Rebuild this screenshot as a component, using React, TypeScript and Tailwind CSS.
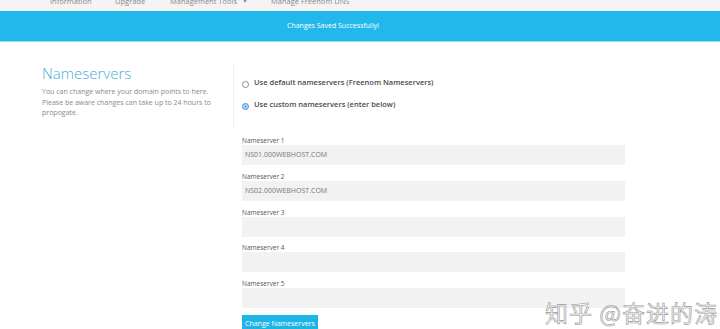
const navItems = ["Information", "Upgrade", "Management Tools", "Manage Freenom DNS"]

const servers = [
  { label: "Nameserver 1", value: "NS01.000WEBHOST.COM" },
  { label: "Nameserver 2", value: "NS02.000WEBHOST.COM" },
  { label: "Nameserver 3", value: "" },
  { label: "Nameserver 4", value: "" },
  { label: "Nameserver 5", value: "" },
]

function Radio({ checked, label }: { checked?: boolean; label: string }) {
  return (
    <label className="flex items-center gap-[5px] h-[12px]">
      <span
        className={
          checked
            ? "w-[7px] h-[7px] rounded-full border border-[#5b9fe0] bg-[#2f7fd8] shadow-[inset_0_0_0_1.5px_#cfe3f8] mt-[3px]"
            : "w-[7px] h-[7px] rounded-full border border-[#8a8a8a] bg-white mt-[3px]"
        }
      />
      <span className="text-[7.5px] font-semibold text-[#4a4a4a]">{label}</span>
    </label>
  )
}

export default function App() {
  return (
    <div className="relative w-[720px] h-[329px] overflow-hidden bg-white font-['Open_Sans',sans-serif]">
      <div className="h-[11px] bg-[#f4f4f4] overflow-hidden">
        <div className="flex items-center -mt-[4px] text-[7.5px] leading-[10px] text-[#8a8a8a]">
          <span className="ml-[50px] w-[65px]">{navItems[0]}</span>
          <span className="w-[55px]">{navItems[1]}</span>
          <span className="w-[72px]">{navItems[2]}</span>
          <span className="w-[29px] text-[6px]">▼</span>
          <span>{navItems[3]}</span>
        </div>
      </div>

      <div className="h-[31px] bg-[#23b8eb] border-b border-[#9ad9f2] flex items-center pl-[287px]">
        <span className="text-[7px] text-white">Changes Saved Successfully!</span>
      </div>

      <div className="flex pt-[22px]">
        <div className="w-[192px] ml-[42px] self-start border-r border-[#f0f0f0] pb-[8px]">
          <h1 className="text-[15px] leading-[18px] font-light text-[#4eaad6]">Nameservers</h1>
          <p className="mt-[5px] text-[7px] leading-[10.5px] text-[#8a8a8a] pr-[10px]">
            You can change where your domain points to here. Please be aware changes can take up to 24 hours to
            propogate.
          </p>
        </div>

        <div className="w-[383px] ml-[8px] pt-[13px]">
          <div className="flex flex-col gap-[9.5px]">
            <Radio label="Use default nameservers (Freenom Nameservers)" />
            <Radio checked label="Use custom nameservers (enter below)" />
          </div>

          <div className="mt-[25.5px]">
            {servers.map((s) => (
              <div key={s.label} className="mb-[6.75px]">
                <div className="h-[9px] text-[6.5px] leading-[9px] text-[#555]">{s.label}</div>
                <div className="h-[20px] bg-[#f2f2f2] flex items-center pl-[3px] text-[7px] text-[#777]">
                  {s.value}
                </div>
              </div>
            ))}
          </div>

          <button className="block mt-[1px] h-[17px] px-[3px] bg-[#1fb4e8] text-white text-[7px] leading-[17px]">
            Change Nameservers
          </button>
        </div>
      </div>

      <div className="absolute left-[545px] top-[297px] text-[23px] leading-[30px] text-[#f4f4f4] [-webkit-text-stroke:0.6px_#9a9a9a] font-['Noto_Sans_CJK_SC',sans-serif] tracking-[1px]">
        知乎 @奋进的涛
      </div>
    </div>
  )
}
